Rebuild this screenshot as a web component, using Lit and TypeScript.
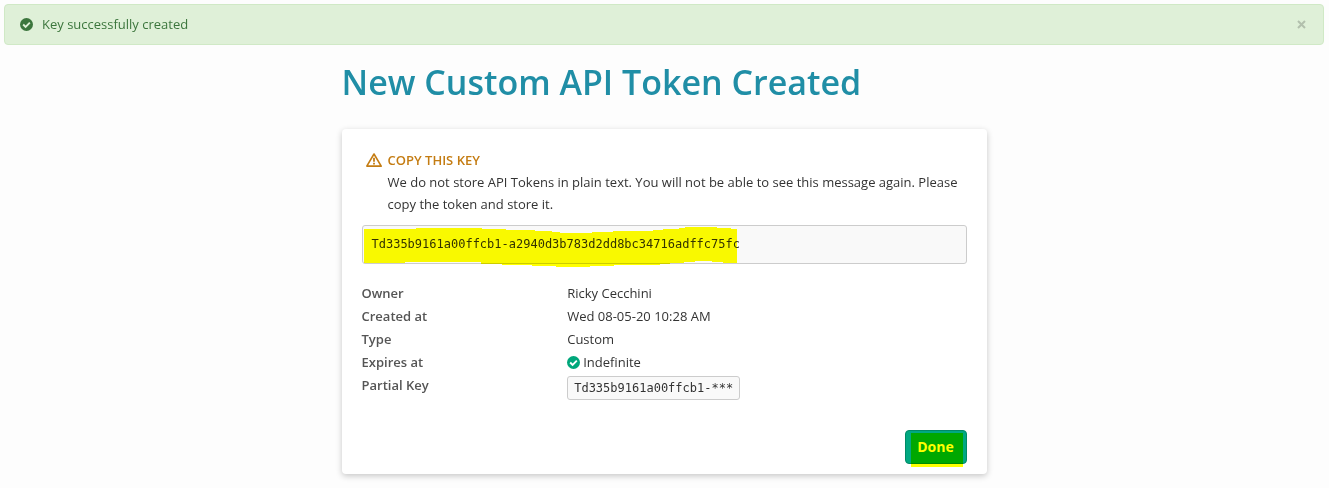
import { LitElement, html, css, svg } from "lit";
import { customElement } from "lit/decorators.js";

const checkCircle = svg`
  <circle cx="8" cy="8" r="8" fill="currentColor"></circle>
  <path d="M3.9 8 L6.9 11 L12.1 5.8" fill="none" stroke="var(--tick)" stroke-width="2.3"></path>`;

@customElement("app-root")
export class AppRoot extends LitElement {
  static styles = css`
    :host {
      display: block;
      box-sizing: border-box;
      min-height: 100vh;
      padding: 4px 5px 14px 4px;
      background: #fdfdfd;
      color: #333;
      font: 13px/22px "Open Sans", sans-serif;
    }
    * {
      box-sizing: border-box;
    }
    .alert {
      display: flex;
      align-items: center;
      padding: 8px 16px 9px 15px;
      border: 1px solid #d0e9c6;
      border-radius: 4px;
      background: #dff0d8;
      color: #3c763d;
      --tick: #dff0d8;
    }
    .alert-text {
      flex: 1;
      margin-left: 9px;
    }
    .icon {
      display: block;
      flex: none;
      width: 13px;
      height: 13px;
    }
    .close {
      display: flex;
      padding: 1px;
      border: 0;
      background: none;
      color: #b2c0ad;
    }
    .close .icon {
      width: 9px;
      height: 9px;
    }
    main {
      max-width: 645px;
      margin: 0 auto;
    }
    h1 {
      margin: 13px 0 22px;
      color: #208ea6;
      font-size: 34px;
      font-weight: 600;
      line-height: 49px;
    }
    .card {
      padding: 20px 20px 10px;
      border-radius: 4px;
      background: #fff;
      box-shadow: 0 2px 6px rgba(0, 0, 0, 0.22);
    }
    .notice {
      display: flex;
      gap: 6px;
      padding-left: 4px;
    }
    .warn {
      display: block;
      flex: none;
      width: 16px;
      height: 14px;
      margin-top: 4px;
    }
    h2 {
      margin: 0;
      color: #c47c12;
      font-size: 13px;
      font-weight: 600;
      line-height: 22px;
    }
    p {
      margin: 0;
    }
    .token {
      position: relative;
      margin-top: 10px;
      padding: 0 9px 1px;
      border: 1px solid #ccc;
      border-radius: 3px;
      background: #f9f9f9;
      line-height: 35px;
    }
    code {
      font-family: "DejaVu Sans Mono", monospace;
      font-size: 12px;
    }
    .marker {
      position: absolute;
      mix-blend-mode: multiply;
      pointer-events: none;
    }
    .marker-token {
      left: 1px;
      top: 0;
      width: 373px;
      height: 41px;
    }
    .marker-done {
      left: 5px;
      top: 2px;
      width: 52px;
      height: 34px;
      background: #ff0;
    }
    dl {
      display: grid;
      grid-template-columns: 34% 1fr;
      grid-auto-rows: minmax(23px, auto);
      margin: 18px 0 0;
    }
    dt {
      color: #555;
      font-weight: 600;
      line-height: 23px;
    }
    dd {
      display: flex;
      align-items: center;
      gap: 3px;
      margin: 0;
      line-height: 23px;
    }
    .ok {
      color: #00a77b;
      --tick: #fff;
    }
    .chip {
      margin-top: 2px;
      padding: 0 6px;
      border: 1px solid #ccc;
      border-radius: 3px;
      background: #f9f9f9;
      line-height: 22px;
    }
    .actions {
      display: flex;
      justify-content: flex-end;
      margin-top: 30px;
    }
    .done {
      position: relative;
      width: 62px;
      height: 34px;
      padding: 0;
      border: 1px solid #008a66;
      border-radius: 4px;
      background: #00a881;
      color: #fff;
      font: 700 14px/30px "Open Sans", sans-serif;
    }
  `;

  render() {
    return html`
      <div class="alert" role="status">
        <svg class="icon" viewBox="0 0 16 16" aria-hidden="true">${checkCircle}</svg>
        <span class="alert-text">Key successfully created</span>
        <button class="close" type="button" aria-label="Close">
          <svg class="icon" viewBox="0 0 9 9" aria-hidden="true">
            <path d="M1 1 L8 8 M8 1 L1 8" stroke="currentColor" stroke-width="2"></path>
          </svg>
        </button>
      </div>
      <main>
        <h1>New Custom API Token Created</h1>
        <section class="card">
          <div class="notice">
            <svg class="warn" viewBox="0 0 16 14" fill="none" stroke="#c47c12" aria-hidden="true">
              <path d="M8 1 L15.2 13.1 H0.8 Z" stroke-width="1.6" stroke-linejoin="round"></path>
              <path d="M8 4.8 V8.8 M8 9.8 V11.6" stroke-width="1.8"></path>
            </svg>
            <div>
              <h2>COPY THIS KEY</h2>
              <p>
                We do not store API Tokens in plain text. You will not be able to see this message
                again. Please copy the token and store it.
              </p>
            </div>
          </div>
          <div class="token">
            <code>Td335b9161a00ffcb1-a2940d3b783d2dd8bc34716adffc75fc</code>
            <svg class="marker marker-token" viewBox="0 0 373 41" fill="#ff0" aria-hidden="true">
              <path
                d="M0 3H52V2H118V3H142V4H171V5H188V6H196V7H228V6H249V5H289V4H299V3H315V2H321V1H353V2H367V3H373V37H359V36H348V35H331V36H320V37H306V38H296V39H250V40H226V41H192V40H168V39H138V38H117V36H41V37H0Z"
              ></path>
            </svg>
          </div>
          <dl>
            <dt>Owner</dt>
            <dd>Ricky Cecchini</dd>
            <dt>Created at</dt>
            <dd>Wed 08-05-20 10:28 AM</dd>
            <dt>Type</dt>
            <dd>Custom</dd>
            <dt>Expires at</dt>
            <dd>
              <svg class="icon ok" viewBox="0 0 16 16" aria-hidden="true">${checkCircle}</svg>
              Indefinite
            </dd>
            <dt>Partial Key</dt>
            <dd><code class="chip">Td335b9161a00ffcb1-***</code></dd>
          </dl>
          <div class="actions">
            <button class="done" type="button">Done<span class="marker marker-done"></span></button>
          </div>
        </section>
      </main>
    `;
  }
}
